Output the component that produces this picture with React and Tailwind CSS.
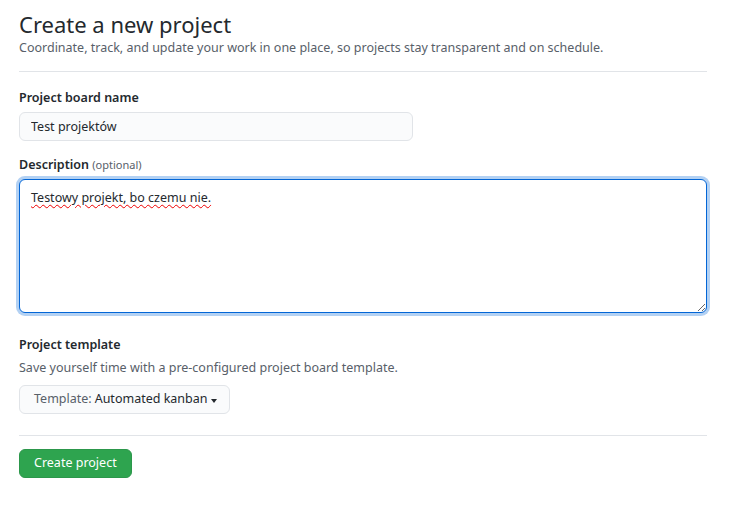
import React, { useState } from "react";

const App = () => {
  const [name, setName] = useState("Test projektów");
  const [desc, setDesc] = useState("Testowy projekt, bo czemu nie.");

  return (
    <div
      className="min-h-screen bg-white text-[#24292e]"
      style={{ fontFamily: '"Noto Sans", "Liberation Sans", sans-serif' }}
    >
      <div className="w-[688px] ml-[19px] pt-[9px]">
        <div className="pb-[14px] border-b border-[#e1e4e8]">
          <h1 className="text-[22px] leading-[30px] font-normal">Create a new project</h1>
          <p className="text-[12.5px] leading-[18px] text-[#586069]">
            Coordinate, track, and update your work in one place, so projects stay transparent and on schedule.
          </p>
        </div>

        <form className="pt-[16px]">
          <label className="block text-[12.5px] leading-[20px] font-semibold mb-[4px]">
            Project board name
          </label>
          <input
            value={name}
            onChange={(e) => setName(e.target.value)}
            className="w-[394px] h-[29px] px-[11px] text-[12.5px] bg-[#fafbfc] border border-[#e1e4e8] rounded-[6px] outline-none"
          />

          <label className="block text-[12.5px] leading-[20px] font-semibold mt-[14px] mb-[4px]">
            Description{" "}
            <span className="text-[11px] font-normal text-[#586069]">(optional)</span>
          </label>
          <textarea
            value={desc}
            onChange={(e) => setDesc(e.target.value)}
            spellCheck={false}
            className="block w-[688px] h-[134px] px-[11px] pt-[8px] pb-[8px] text-[12.5px] leading-[20px] bg-white border border-[#0366d6] rounded-[6px] outline-none shadow-[0_0_0_3px_rgba(3,102,214,0.3)] resize-y underline decoration-wavy decoration-[#e00] decoration-1 underline-offset-2"
          />

          <label className="block text-[12.5px] leading-[20px] font-semibold mt-[22px]">
            Project template
          </label>
          <p className="text-[12.5px] leading-[18px] text-[#586069] mt-[4px]">
            Save yourself time with a pre-configured project board template.
          </p>
          <button
            type="button"
            className="mt-[8px] h-[29px] pl-[14px] pr-[12px] flex items-center gap-[3px] text-[12.5px] bg-[#fafbfc] border border-[#e1e4e8] rounded-[6px]"
          >
            <span className="text-[#586069]">Template:</span>
            <span>Automated kanban</span>
            <span className="ml-[1px] w-0 h-0 border-x-[3.5px] border-x-transparent border-t-[4px] border-t-[#24292e] mt-[2px]" />
          </button>

          <div className="border-t border-[#e1e4e8] mt-[21px] pt-[13px]">
            <button
              type="button"
              className="h-[29px] px-[14px] text-[12.5px] text-white bg-[#2ea44f] border border-[#2c974b] rounded-[6px]"
            >
              Create project
            </button>
          </div>
        </form>
      </div>
    </div>
  );
};

export default App;
